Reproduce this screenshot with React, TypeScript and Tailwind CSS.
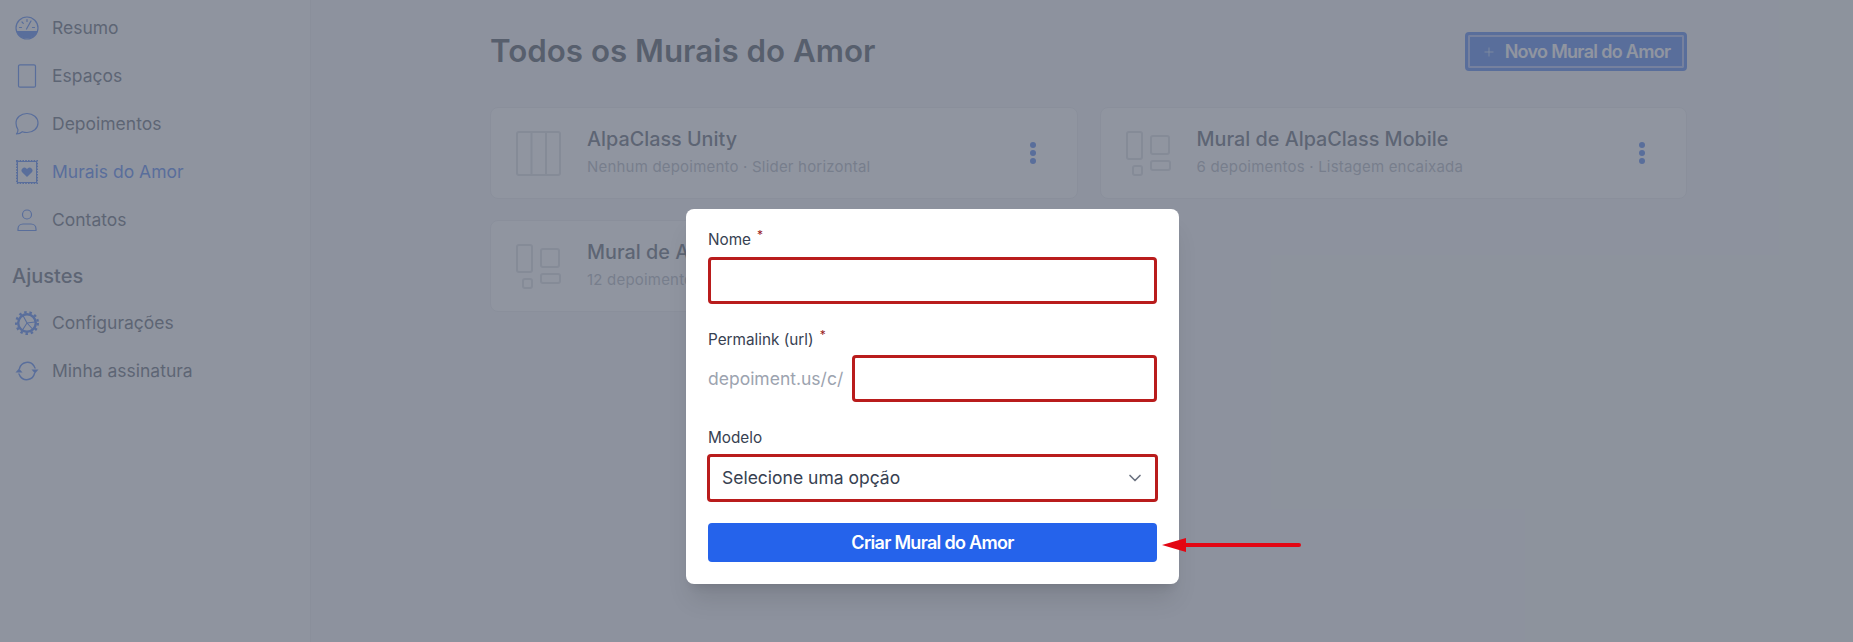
import React from 'react';
import { ChevronDown, Plus } from 'lucide-react';

const GaugeIcon = () => (
  <svg viewBox="0 0 24 24" className="w-6 h-6 text-[#2563eb]" fill="none" stroke="currentColor" strokeWidth="1.2">
    <circle cx="12" cy="12" r="11" />
    <path d="M2 15.500h20a11 11 0 0 1-20 0z" fill="currentColor" />
    <path d="M11.500 13l4.500-8M4.500 11.500h2M7 6l1.300 1.300M12 3.500v2M19.500 11.500h-2" strokeLinecap="round" />
  </svg>
);

const PhoneIcon = () => (
  <svg viewBox="0 0 24 24" className="w-6 h-6 text-[#2563eb]" fill="none" stroke="currentColor" strokeWidth="1.2">
    <rect x="3.500" y="0.800" width="17" height="22.400" rx="1.500" />
  </svg>
);

const ChatIcon = () => (
  <svg viewBox="0 0 24 24" className="w-6 h-6 text-[#2563eb]" fill="none" stroke="currentColor" strokeWidth="1.2">
    <path d="M12 1.500c6.200 0 11 4 11 9.500s-4.800 9.500-11 9.500c-1.700 0-3.300-.3-4.700-.8-1.500 1.300-3.500 2.200-5.800 2.300 1-1.200 1.500-2.700 1.500-4.300C1.900 15.900 1 13.600 1 11c0-5.500 4.800-9.500 11-9.500z" strokeLinejoin="round" />
  </svg>
);

const StampIcon = () => (
  <svg viewBox="0 0 24 24" className="w-6 h-6 text-[#2563eb]" fill="none" stroke="currentColor">
    <rect x="2.500" y="1.500" width="19" height="21" strokeWidth="1" />
    <rect x="1.800" y="0.800" width="20.400" height="22.400" strokeWidth="1.600" strokeDasharray="1.600 1.200" />
    <path d="M12 17l-4.600-4.600a2.800 2.800 0 0 1 4-4l.6.600.6-.6a2.800 2.800 0 0 1 4 4z" fill="currentColor" stroke="none" />
  </svg>
);

const UserIcon = () => (
  <svg viewBox="0 0 24 24" className="w-6 h-6 text-[#2563eb]" fill="none" stroke="currentColor" strokeWidth="1.2">
    <circle cx="12" cy="6.500" r="4.500" />
    <path d="M3 22.500v-1.500c0-2.800 2.200-5 5-5h8c2.800 0 5 2.200 5 5v1.500z" strokeLinejoin="round" />
  </svg>
);

const GearIcon = () => (
  <svg viewBox="0 0 24 24" className="w-6 h-6 text-[#2563eb]" fill="none" stroke="currentColor">
    <circle cx="12" cy="12" r="8.800" strokeWidth="2.400" />
    <circle cx="12" cy="12" r="10.800" strokeWidth="2.400" strokeDasharray="2.500 2.800" />
    <path d="M12 12l8-1M12 12l5.500 6M12 12L8 4.500M12 12l-4.500 7" strokeWidth="1.100" />
  </svg>
);

const RefreshIcon = () => (
  <svg viewBox="0 0 24 24" className="w-6 h-6 text-[#2563eb]" fill="none" stroke="currentColor" strokeWidth="1.400">
    <path d="M4.500 9.500a8 8 0 0 1 14.500-2.500l1 2M19.500 14.500a8 8 0 0 1-14.500 2.500l-1-2" strokeLinecap="round" />
    <path d="M23.500 10.500h-7l3.500 4zM.5 13.500h7l-3.500-4z" fill="currentColor" stroke="none" />
  </svg>
);

const ColumnsIcon = () => (
  <svg viewBox="0 0 45 45" className="w-[45px] h-[45px] text-[#d1d5db]" fill="none" stroke="currentColor" strokeWidth="2">
    <rect x="1" y="1" width="43" height="43" rx="2" />
    <path d="M15.500 1v43M30 1v43" />
  </svg>
);

const MasonryIcon = () => (
  <svg viewBox="0 0 45 45" className="w-[45px] h-[45px] text-[#d1d5db]" fill="none" stroke="currentColor" strokeWidth="2">
    <rect x="1" y="1" width="15" height="27" rx="2" />
    <rect x="25" y="5" width="18" height="18" rx="2" />
    <rect x="7" y="35" width="9" height="9" rx="2" />
    <rect x="25" y="30" width="19" height="9" rx="2" />
  </svg>
);

const navItems = [
  { label: 'Resumo', icon: <GaugeIcon /> },
  { label: 'Espaços', icon: <PhoneIcon /> },
  { label: 'Depoimentos', icon: <ChatIcon /> },
  { label: 'Murais do Amor', icon: <StampIcon />, active: true },
  { label: 'Contatos', icon: <UserIcon /> },
];

const settingsItems = [
  { label: 'Configurações', icon: <GearIcon /> },
  { label: 'Minha assinatura', icon: <RefreshIcon /> },
];

const murals = [
  { title: 'AlpaClass Unity', info: 'Nenhum depoimento · Slider horizontal', icon: <ColumnsIcon /> },
  { title: 'Mural de AlpaClass Mobile', info: '6 depoimentos · Listagem encaixada', icon: <MasonryIcon /> },
  { title: 'Mural de AlpaClass Web', info: '12 depoimentos · Listagem encaixada', icon: <MasonryIcon /> },
];

const NavRow: React.FC<{ label: string; icon: React.ReactNode; active?: boolean }> = ({ label, icon, active }) => (
  <div className={`h-12 flex items-center gap-[13px] pl-[15px] text-[17.5px] ${active ? 'text-[#2563eb]' : 'text-[#374151]'}`}>
    {icon}
    <span>{label}</span>
  </div>
);

const MuralCard: React.FC<{ title: string; info: string; icon: React.ReactNode }> = ({ title, info, icon }) => (
  <div className="h-[92px] bg-white rounded-lg border border-[#e5e7eb] flex items-center pl-[25px] pr-[41px]">
    {icon}
    <div className="ml-[26px] flex-1 -mt-[2px]">
      <div className="text-[19.800px] font-medium text-[#374151] leading-7">{title}</div>
      <div className="text-[15px] text-[#9ca3af] mt-[3px] tracking-[0.2px]">{info}</div>
    </div>
    <div className="flex flex-col gap-[2px]">
      <div className="w-[6px] h-[6px] rounded-full bg-[#2563eb]" />
      <div className="w-[6px] h-[6px] rounded-full bg-[#2563eb]" />
      <div className="w-[6px] h-[6px] rounded-full bg-[#2563eb]" />
    </div>
  </div>
);

const Required = () => <span className="text-[#991b1b] text-xs align-super ml-[6px] leading-none">*</span>;

const App: React.FC = () => {
  return (
    <div className="relative w-full h-[642px] overflow-hidden flex bg-[#f3f4f6] font-['Inter',sans-serif]">
      <aside className="w-[311px] shrink-0 bg-[#f9fafb] border-r border-[#e5e7eb] pt-1">
        {navItems.map(item => <NavRow key={item.label} {...item} />)}
        <div className="mt-[18px] mb-[9px] pl-3 h-7 flex items-center text-[20px] font-medium text-[#374151]">Ajustes</div>
        {settingsItems.map(item => <NavRow key={item.label} {...item} />)}
      </aside>

      <main className="flex-1 pl-[179px] pr-[166px] pt-8">
        <header className="h-[39px] flex items-center justify-between mb-[36px]">
          <h1 className="text-[31.300px] font-semibold text-[#1f2937]">Todos os Murais do Amor</h1>
          <button className="h-[39px] w-[222px] flex items-center justify-center gap-[9px] rounded bg-[#2563eb] text-white font-semibold text-[18px] tracking-[-0.7px] border-[3px] border-[#2563eb] ring-2 ring-inset ring-[#c7d2fe]/70">
            <Plus className="w-[14px] h-[14px] text-[#bfdbfe]" strokeWidth={1.5} />
            Novo Mural do Amor
          </button>
        </header>
        <div className="grid grid-cols-2 gap-x-[22px] gap-y-[21px]">
          {murals.map(m => <MuralCard key={m.title} {...m} />)}
        </div>
      </main>

      {/* modal por cima da pagina */}
      <div className="absolute inset-0 bg-[#6b7280]/75 flex justify-center pl-3 pt-[209px]">
        <div className="w-[493px] h-[375px] bg-white rounded-lg shadow-xl px-[22px] pt-[20px]">
          <div className="text-[15.300px] text-[#374151] leading-[18px]">Nome<Required /></div>
          <input className="mt-[8px] block w-full h-[47px] border-[3px] border-[#b91c1c] rounded-sm outline-none" />

          <div className="mt-[25px] text-[15.300px] text-[#374151] leading-[18px]">Permalink (url)<Required /></div>
          <div className="mt-[6px] flex items-center">
            <span className="w-[144px] shrink-0 text-[17.500px] text-[#9ca3af]">depoiment.us/c/</span>
            <input className="flex-1 min-w-0 h-[47px] border-[3px] border-[#b91c1c] rounded-sm outline-none" />
          </div>

          <div className="mt-[27px] text-[15.300px] text-[#374151] leading-[18px]">Modelo</div>
          <div className="mt-[7px] -mx-px h-[48px] border-[3px] border-[#b91c1c] rounded-sm flex items-center justify-between pl-[12px] pr-[10px] text-[17.500px] text-[#374151]">
            <span>Selecione uma opção</span>
            <ChevronDown className="w-5 h-5 text-[#6b7280]" strokeWidth={2} />
          </div>

          <button className="mt-[21px] w-full h-[39px] rounded bg-[#2563eb] text-white font-semibold text-[18px] tracking-[-0.7px]">
            Criar Mural do Amor
          </button>
        </div>
      </div>

      {/* seta vermelha da anotacao */}
      <svg className="absolute left-[1160px] top-[536px] w-[142px] h-[18px]" viewBox="0 0 142 18">
        <path d="M2 9 L26 2 L26 16 Z" fill="#e30613" />
        <path d="M24 9 H139" stroke="#e30613" strokeWidth="4" strokeLinecap="round" />
      </svg>
    </div>
  );
};

export default App;
